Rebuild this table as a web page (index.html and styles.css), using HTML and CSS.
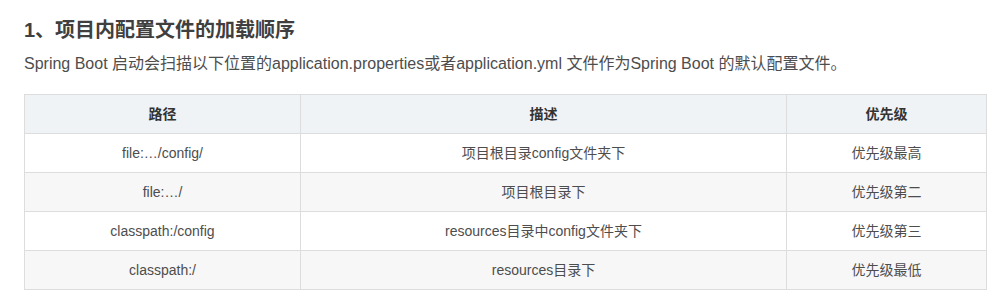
FILE: index.html
```html
<!DOCTYPE html>
<html lang="zh-CN">
<head>
<meta charset="utf-8">
<link rel="stylesheet" href="styles.css">
</head>
<body>
<div class="article">
  <h3 class="title">1、项目内配置文件的加载顺序</h3>
  <p class="desc">Spring Boot 启动会扫描以下位置的application.properties或者application.yml 文件作为Spring Boot 的默认配置文件。</p>
  <table class="tbl">
    <colgroup>
      <col class="c1"><col class="c2"><col class="c3">
    </colgroup>
    <thead>
      <tr><th>路径</th><th>描述</th><th>优先级</th></tr>
    </thead>
    <tbody>
      <tr><td>file:…/config/</td><td>项目根目录config文件夹下</td><td>优先级最高</td></tr>
      <tr><td>file:…/</td><td>项目根目录下</td><td>优先级第二</td></tr>
      <tr><td>classpath:/config</td><td>resources目录中config文件夹下</td><td>优先级第三</td></tr>
      <tr><td>classpath:/</td><td>resources目录下</td><td>优先级最低</td></tr>
    </tbody>
  </table>
</div>
</body>
</html>
```

FILE: styles.css
```css
html, body {
  margin: 0;
  padding: 0;
  background: #fff;
}
body {
  font-family: "Liberation Sans", Arial, "Noto Sans CJK SC", sans-serif;
  color: #4d4d4d;
}
.article {
  padding: 16px 6px 0 24px;
}
.title {
  margin: 0;
  font-size: 20px;
  line-height: 28px;
  font-weight: bold;
  color: #3f3f3f;
}
.desc {
  margin: 8px 0 0;
  font-size: 16px;
  line-height: 24px;
  color: #4d4d4d;
}
.tbl {
  margin-top: 18px;
  width: 962px;
  border-collapse: collapse;
  table-layout: fixed;
  font-size: 14px;
  color: #4d4d4d;
}
.c1 { width: 276px; }
.c2 { width: 486px; }
.c3 { width: 200px; }
.tbl th, .tbl td {
  border: 1px solid #dddddd;
  height: 39px;
  padding: 0 8px;
  text-align: center;
  vertical-align: middle;
  line-height: 22px;
  box-sizing: border-box;
}
.tbl th {
  background: #eff3f6;
  font-weight: bold;
  color: #333;
}
.tbl tbody tr:nth-child(even) td {
  background: #f7f7f7;
}
```
